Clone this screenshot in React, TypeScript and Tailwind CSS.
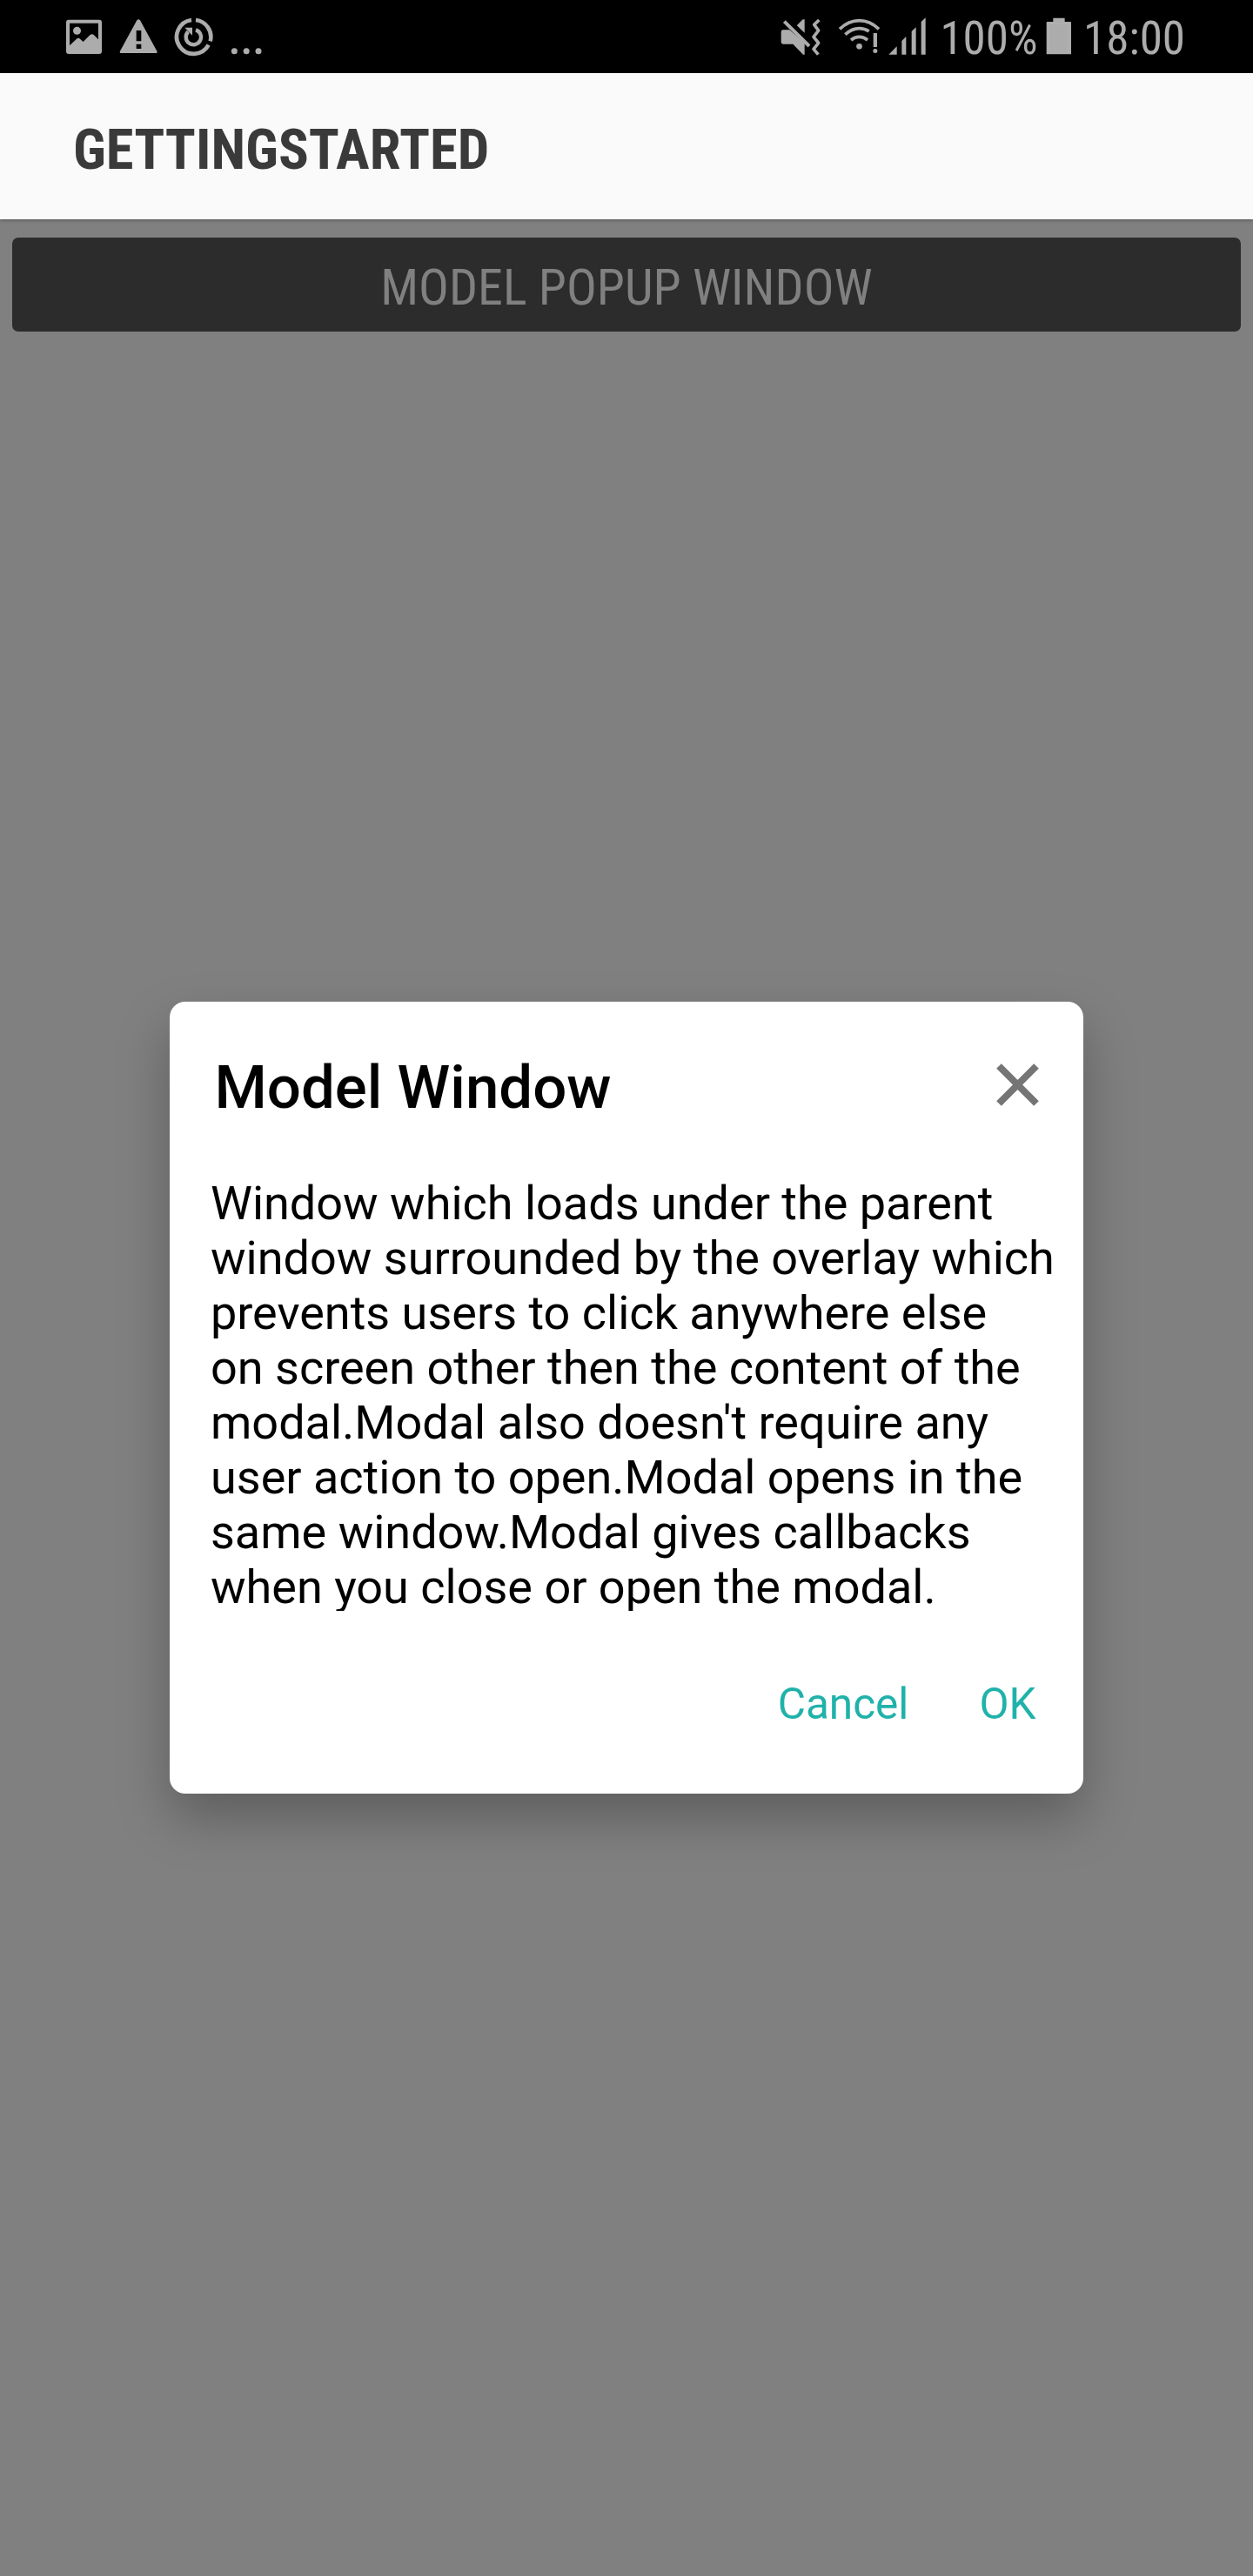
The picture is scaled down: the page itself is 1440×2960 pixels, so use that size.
import React from "react";

const GREY = "#acacac";

function PictureIcon() {
  return (
    <svg className="h-[45px] w-[43px]" viewBox="45 60 129 135" fill={GREY}>
      <path
        fillRule="evenodd"
        d="M57 68H162Q171 68 171 77V177Q171 186 162 186H57Q48 186 48 177V77Q48 68 57 68ZM60 80V157L84 134Q90 129 96 134L107 144L130 121Q137 115 144 121L159 136V80Z"
      />
      <circle cx="85.500" cy="106" r="13.500" />
    </svg>
  );
}

function WarningIcon() {
  return (
    <svg className="ml-[19px] h-[45px] w-[45px]" viewBox="231 60 135 135" fill={GREY}>
      <path
        fillRule="evenodd"
        d="M292 70Q297.500 64 303 70L361 176Q364 183 357 183H238Q231 183 234 176ZM290 105V142H307V105ZM290 152V168H307V152Z"
      />
    </svg>
  );
}

function SyncCircleIcon() {
  return (
    <svg className="ml-[18px] h-[45px] w-[45px]" viewBox="420 60 135 135" fill="none" stroke={GREY}>
      <path d="M480 69A58.500 58.500 0 1 0 539 155" strokeWidth="14" />
      <path d="M495 69A58.500 58.500 0 0 1 545 142" strokeWidth="14" />
      <path d="M469 109A26 26 0 1 0 495 103" strokeWidth="13" />
      <path d="M457 95H483V122Z" fill={GREY} stroke="none" />
    </svg>
  );
}

function MoreDots() {
  return (
    <svg className="ml-[20px] h-[45px] w-[37px]" viewBox="615 60 111 135" fill={GREY}>
      <circle cx="628" cy="176" r="10.500" />
      <circle cx="669.500" cy="176" r="10.500" />
      <circle cx="711" cy="176" r="10.500" />
    </svg>
  );
}

function MuteVibrateIcon() {
  return (
    <svg className="h-[45px] w-[47px]" viewBox="51 60 141 135" fill={GREY}>
      <path d="M53 110Q53 103 60 103H82L134 148V188H129L94 152H60Q53 152 53 145Z" />
      <path d="M107 88L128 67H134V113Z" />
      <path d="M75 62L165 155" stroke="#000" strokeWidth="9" />
      <path d="M64 74L150 159" stroke={GREY} strokeWidth="12" />
      <path
        d="M184 69L167 85L182 105L165 127L182 148L165 169L181 188"
        fill="none"
        stroke={GREY}
        strokeWidth="11"
        strokeLinejoin="round"
      />
    </svg>
  );
}

function WifiAlertIcon() {
  return (
    <svg className="ml-[19px] h-[45px] w-[49px]" viewBox="249 60 147 135" fill="none" stroke={GREY} strokeWidth="11">
      <path d="M255 100Q286 71 322.500 71Q359 71 390 100" />
      <path d="M274 119Q297 98 322.500 98Q341 98 356 108" />
      <path d="M294 138Q307 127 322.500 127Q338 127 351 138" />
      <circle cx="322.500" cy="160" r="10" fill={GREY} stroke="none" />
      <path d="M371 114H384V162H371Z" fill={GREY} stroke="none" />
      <circle cx="377.500" cy="175.500" r="7.500" fill={GREY} stroke="none" />
    </svg>
  );
}

function SignalIcon() {
  return (
    <svg className="ml-[9px] h-[45px] w-[43px]" viewBox="423 60 129 135" fill={GREY}>
      <path d="M424 188L452 160V188Z" />
      <path d="M469 188V141L484 126V188Z" />
      <path d="M503 188V108L518 94V188Z" />
      <path d="M536 188V75L551 61V188Z" />
    </svg>
  );
}

function BatteryIcon() {
  return (
    <svg className="ml-[10px] h-[45px] w-[30px]" viewBox="426 60 90 135" fill={GREY}>
      <path d="M451 62H491V75H510Q513 75 513 78V187H428V78Q428 75 431 75H451Z" />
      <path d="M437 178V82H504V178" fill="none" stroke="#bababa" strokeWidth="2" />
    </svg>
  );
}

function CloseIcon() {
  return (
    <svg className="block h-[49px] w-[49px]" viewBox="0 0 49 49" stroke="#757575" strokeWidth="8">
      <path d="M3 3L46 46M46 3L3 46" />
    </svg>
  );
}

function StatusBar() {
  return (
    <div className="flex h-[84px] items-start justify-between bg-black pr-[78px] pl-[75px] text-[53px] text-[#acacac] [font-stretch:condensed]">
      <div className="flex pt-[20px]">
        <PictureIcon />
        <WarningIcon />
        <SyncCircleIcon />
        <MoreDots />
      </div>
      <div className="flex items-start">
        <div className="flex pt-[20px]">
          <MuteVibrateIcon />
          <WifiAlertIcon />
          <SignalIcon />
        </div>
        <span className="ml-[16px] leading-[88px]">100%</span>
        <div className="pt-[20px]">
          <BatteryIcon />
        </div>
        <span className="ml-[12.500px] leading-[88px]">18:00</span>
      </div>
    </div>
  );
}

const BODY_LINES = [
  "Window which loads under the parent",
  "window surrounded by the overlay which",
  "prevents users to click anywhere else",
  "on screen other then the content of the",
  "modal.Modal also doesn't require any",
  "user action to open.Modal opens in the",
  "same window.Modal gives callbacks",
  "when you close or open the modal.",
];

function ModelWindow() {
  return (
    <section
      role="dialog"
      className="mx-auto mt-[770px] h-[910px] w-[1050px] rounded-[18px] bg-white text-black shadow-[0_28px_60px_rgba(0,0,0,0.27)]"
    >
      <div className="flex items-start justify-between pt-[64px] pr-[51px] pl-[51.500px]">
        <h2 className="text-[69px] leading-[70px] font-medium">Model Window</h2>
        <button className="mt-[7px]" aria-label="Close">
          <CloseIcon />
        </button>
      </div>
      <div className="mt-[66px] ml-[47px] h-[500px] overflow-hidden text-[54px] leading-[63px] whitespace-nowrap">
        {BODY_LINES.map((line) => (
          <p key={line}>{line}</p>
        ))}
      </div>
      <div className="mt-[77px] flex justify-end gap-[81px] pr-[54.500px] text-[49.500px] leading-[60px] text-[#20b2aa]">
        <button>Cancel</button>
        <button>OK</button>
      </div>
    </section>
  );
}

export default function App() {
  return (
    <div className="flex h-[2960px] w-[1440px] flex-col overflow-hidden bg-[#808080] font-[Roboto,sans-serif]">
      <StatusBar />
      <header className="h-[168px] shrink-0 bg-[#fafafa] pt-[8px] pl-[84px] shadow-[0_1px_4px_rgba(0,0,0,0.35)]">
        <h1 className="text-[64.700px] leading-[160px] font-bold text-[#3a3a3a] [font-stretch:condensed]">
          GETTINGSTARTED
        </h1>
      </header>
      <button className="mx-[14px] mt-[21px] h-[108px] shrink-0 rounded-[7px] bg-[#2c2c2c] pt-[6px] text-center text-[58px] leading-[102px] text-[#808080] [font-stretch:condensed]">
        MODEL POPUP WINDOW
      </button>
      <ModelWindow />
    </div>
  );
}
